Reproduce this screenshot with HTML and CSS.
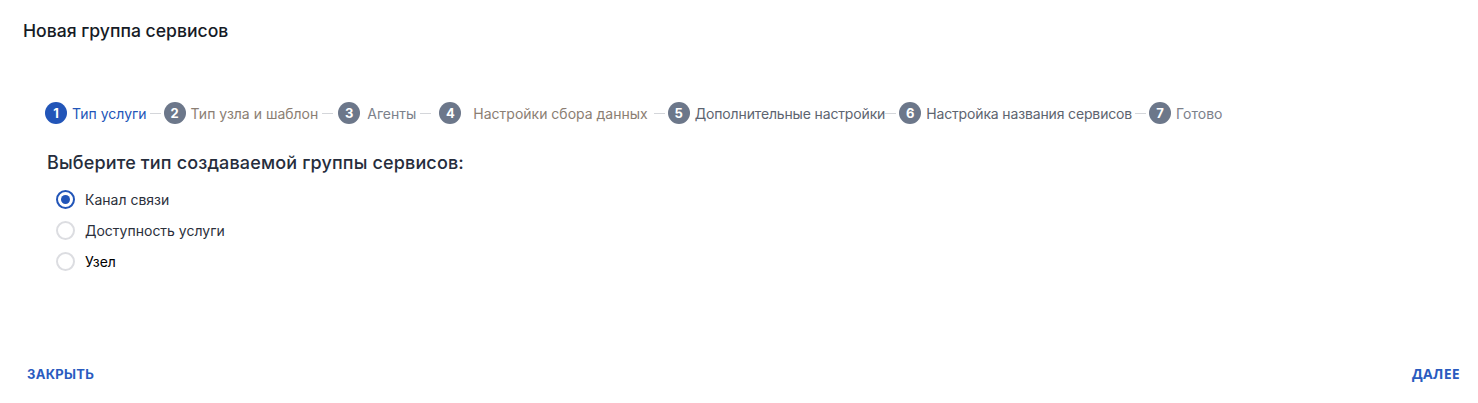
FILE: index.html
```html
<!DOCTYPE html>
<html lang="ru">
<head>
<meta charset="utf-8">
<title>Новая группа сервисов</title>
<link rel="stylesheet" href="styles.css">
</head>
<body>
<div class="dialog">
  <h1 class="title">Новая группа сервисов</h1>
  <div class="content">
    <ol class="stepper">
      <li class="step active"><span class="num">1</span><span class="label">Тип услуги</span></li>
      <li class="sep"></li>
      <li class="step warm"><span class="num">2</span><span class="label">Тип узла и шаблон</span></li>
      <li class="sep sep-mid"></li>
      <li class="step roomy"><span class="num">3</span><span class="label">Агенты</span></li>
      <li class="sep sep-wide"></li>
      <li class="step warm wide"><span class="num">4</span><span class="label">Настройки сбора данных</span></li>
      <li class="sep sep-after-wide"></li>
      <li class="step dark"><span class="num">5</span><span class="label">Дополнительные настройки</span></li>
      <li class="sep sep-tight"></li>
      <li class="step dark"><span class="num">6</span><span class="label">Настройка названия сервисов</span></li>
      <li class="sep"></li>
      <li class="step"><span class="num">7</span><span class="label">Готово</span></li>
    </ol>
    <h2 class="question">Выберите тип создаваемой группы сервисов:</h2>
    <div class="options">
      <label class="option"><span class="radio checked"></span><span class="opt-text">Канал связи</span></label>
      <label class="option"><span class="radio"></span><span class="opt-text">Доступность услуги</span></label>
      <label class="option"><span class="radio"></span><span class="opt-text black">Узел</span></label>
    </div>
  </div>
  <div class="actions">
    <button class="btn">ЗАКРЫТЬ</button>
    <button class="btn next">ДАЛЕЕ</button>
  </div>
</div>
</body>
</html>
```
FILE: styles.css
```css
* { box-sizing: border-box; }
html, body { margin: 0; padding: 0; background: #fff; }
body { font-family: Inter, "Noto Sans", sans-serif; color: #1f2533; }
.dialog {
  height: 403px;
  display: flex;
  flex-direction: column;
}
.title {
  margin: 0;
  padding: 20px 23px 0;
  font-size: 17.6px;
  font-weight: 500;
  line-height: 22px;
  color: #161b26;
}
.content {
  flex: 1;
  padding: 60px 0 0 45px;
}
.stepper {
  list-style: none;
  margin: 0;
  padding: 0;
  display: flex;
  align-items: center;
  height: 22px;
}
.step { display: flex; align-items: center; gap: 5px; }
.step.roomy { gap: 7px; }
.step.wide { gap: 12px; }
.num {
  width: 22px; height: 22px;
  border-radius: 50%;
  background: #6c778a;
  color: #fff;
  font-size: 13px;
  font-weight: 700;
  display: flex; align-items: center; justify-content: center;
}
.label { font-size: 14px; color: #7c818b; white-space: nowrap; }
.step.active .num { background: #2255b8; }
.step.active .label { color: #2255b8; }
.step.warm .label { color: #8b7e73; }
.step.dark .label { color: #5d6470; letter-spacing: -0.15px; }
.sep {
  width: 11px; height: 1px;
  background: #d4d6da;
  margin: 0 3px;
}
.sep.sep-mid { margin: 0 5px 0 4px; }
.sep.sep-wide { margin: 0 8px 0 4px; }
.sep.sep-after-wide { margin: 0 3px 0 6px; }
.sep.sep-tight { margin: 0 3px 0 0; }
.question {
  margin: 28px 0 0 2px;
  font-size: 18px;
  font-weight: 500;
  line-height: 22px;
  color: #262d3c;
  letter-spacing: 0.15px;
}
.options {
  margin-top: 15px;
  padding-left: 11px;
  display: flex;
  flex-direction: column;
  gap: 11px;
}
.option { display: flex; align-items: center; gap: 10px; height: 20px; cursor: pointer; }
.radio {
  width: 19px; height: 19px;
  border-radius: 50%;
  border: 2px solid #dcdde1;
  display: flex; align-items: center; justify-content: center;
}
.radio.checked { border-color: #2255b8; }
.radio.checked::after {
  content: "";
  width: 9px; height: 9px;
  border-radius: 50%;
  background: #2255b8;
}
.opt-text { font-size: 14px; color: #2b303b; }
.opt-text.black { color: #000; }
.actions {
  display: flex;
  justify-content: space-between;
  padding: 0 18px 20px 27px;
}
.btn {
  border: 0;
  background: none;
  padding: 0;
  font-family: Inter, "Noto Sans", sans-serif;
  font-size: 13px;
  font-weight: 700;
  color: #2a5bbf;
  letter-spacing: 0.3px;
  cursor: pointer;
}
.btn.next { font-family: "Open Sans", sans-serif; font-size: 14px; }
```
